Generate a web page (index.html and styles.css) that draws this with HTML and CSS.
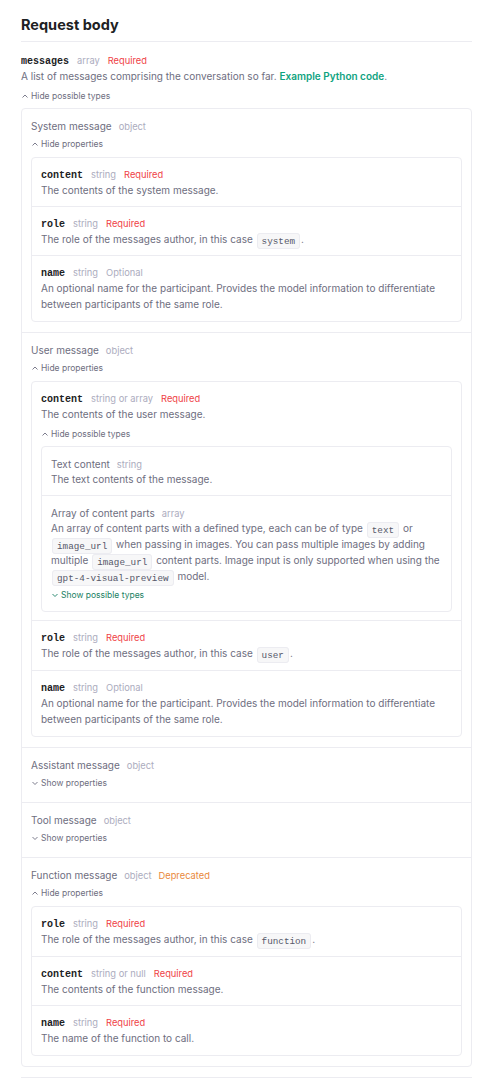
FILE: index.html
```html
<!DOCTYPE html>
<html>
<head>
<meta charset="utf-8">
<link rel="stylesheet" href="styles.css">
</head>
<body>
<div class="page">
  <h2 class="title">Request body</h2>

  <div class="param">
    <div class="param-head"><span class="pname">messages</span><span class="ptype">array</span><span class="req">Required</span></div>
    <div class="desc">A list of messages comprising the conversation so far. <a class="link" href="#">Example Python code</a>.</div>
    <div class="toggle"><svg class="chev" viewBox="0 0 8 8"><polyline points="1.5,5.5 4,3 6.5,5.5"/></svg>Hide possible types</div>

    <div class="box">
      <div class="section">
        <div class="sec-head"><span class="sname">System message</span><span class="ptype">object</span></div>
        <div class="toggle"><svg class="chev" viewBox="0 0 8 8"><polyline points="1.5,5.5 4,3 6.5,5.5"/></svg>Hide properties</div>
        <div class="inner">
          <div class="row">
            <div class="param-head"><span class="pname">content</span><span class="ptype">string</span><span class="req">Required</span></div>
            <div class="desc">The contents of the system message.</div>
          </div>
          <div class="row">
            <div class="param-head"><span class="pname">role</span><span class="ptype">string</span><span class="req">Required</span></div>
            <div class="desc">The role of the messages author, in this case <code>system</code>.</div>
          </div>
          <div class="row">
            <div class="param-head"><span class="pname">name</span><span class="ptype">string</span><span class="opt">Optional</span></div>
            <div class="desc">An optional name for the participant. Provides the model information to differentiate between participants of the same role.</div>
          </div>
        </div>
      </div>

      <div class="section">
        <div class="sec-head"><span class="sname">User message</span><span class="ptype">object</span></div>
        <div class="toggle"><svg class="chev" viewBox="0 0 8 8"><polyline points="1.5,5.5 4,3 6.5,5.5"/></svg>Hide properties</div>
        <div class="inner">
          <div class="row">
            <div class="param-head"><span class="pname">content</span><span class="ptype">string or array</span><span class="req">Required</span></div>
            <div class="desc">The contents of the user message.</div>
            <div class="toggle"><svg class="chev" viewBox="0 0 8 8"><polyline points="1.5,5.5 4,3 6.5,5.5"/></svg>Hide possible types</div>
            <div class="inner nested">
              <div class="row">
                <div class="sec-head"><span class="sname">Text content</span><span class="ptype">string</span></div>
                <div class="desc">The text contents of the message.</div>
              </div>
              <div class="row">
                <div class="sec-head"><span class="sname">Array of content parts</span><span class="ptype">array</span></div>
                <div class="desc">An array of content parts with a defined type, each can be of type <code>text</code> or <code>image_url</code> when passing in images. You can pass multiple images by adding multiple <code>image_url</code> content parts. Image input is only supported when using the <code>gpt-4-visual-preview</code> model.</div>
                <div class="toggle green"><svg class="chev" viewBox="0 0 8 8"><polyline points="1.5,3 4,5.5 6.5,3"/></svg>Show possible types</div>
              </div>
            </div>
          </div>
          <div class="row tall">
            <div class="param-head"><span class="pname">role</span><span class="ptype">string</span><span class="req">Required</span></div>
            <div class="desc">The role of the messages author, in this case <code>user</code>.</div>
          </div>
          <div class="row">
            <div class="param-head"><span class="pname">name</span><span class="ptype">string</span><span class="opt">Optional</span></div>
            <div class="desc">An optional name for the participant. Provides the model information to differentiate between participants of the same role.</div>
          </div>
        </div>
      </div>

      <div class="section collapsed">
        <div class="sec-head"><span class="sname">Assistant message</span><span class="ptype">object</span></div>
        <div class="toggle"><svg class="chev" viewBox="0 0 8 8"><polyline points="1.5,3 4,5.5 6.5,3"/></svg>Show properties</div>
      </div>

      <div class="section collapsed">
        <div class="sec-head"><span class="sname">Tool message</span><span class="ptype">object</span></div>
        <div class="toggle"><svg class="chev" viewBox="0 0 8 8"><polyline points="1.5,3 4,5.5 6.5,3"/></svg>Show properties</div>
      </div>

      <div class="section">
        <div class="sec-head"><span class="sname">Function message</span><span class="ptype">object</span><span class="dep">Deprecated</span></div>
        <div class="toggle"><svg class="chev" viewBox="0 0 8 8"><polyline points="1.5,5.5 4,3 6.5,5.5"/></svg>Hide properties</div>
        <div class="inner">
          <div class="row tall">
            <div class="param-head"><span class="pname">role</span><span class="ptype">string</span><span class="req">Required</span></div>
            <div class="desc">The role of the messages author, in this case <code>function</code>.</div>
          </div>
          <div class="row">
            <div class="param-head"><span class="pname">content</span><span class="ptype">string or null</span><span class="req">Required</span></div>
            <div class="desc">The contents of the function message.</div>
          </div>
          <div class="row">
            <div class="param-head"><span class="pname">name</span><span class="ptype">string</span><span class="req">Required</span></div>
            <div class="desc">The name of the function to call.</div>
          </div>
        </div>
      </div>
    </div>
  </div>
  <div class="divider"></div>
</div>
</body>
</html>
```

FILE: styles.css
```css
* { box-sizing: border-box; }
html, body { margin: 0; padding: 0; background: #fff; }
body {
  font-family: Inter, "Noto Sans", "Liberation Sans", sans-serif;
  color: #6e6e80;
  font-size: 10px;
}
.page { padding: 13px 7px 0 21px; }
.title {
  margin: 0;
  font-size: 14.5px;
  font-weight: 700;
  line-height: 24px;
  color: #202123;
  padding-bottom: 4px;
  border-bottom: 1px solid #ececf1;
}
.param { padding-top: 12px; }
.param-head, .sec-head {
  display: flex;
  align-items: baseline;
  gap: 8px;
  line-height: 14px;
  height: 14px;
}
.sec-head { gap: 7px; }
.pname {
  font-family: "Liberation Mono", "DejaVu Sans Mono", monospace;
  font-weight: 700;
  font-size: 10px;
  color: #202123;
}
.ptype { color: #acacbe; font-size: 9.3px; }
.req { color: #ef4146; font-size: 9.3px; }
.opt { color: #acacbe; font-size: 9.3px; }
.dep { color: #e9883a; font-size: 9.3px; }
.sname { color: #6e6e80; font-size: 10px; }
.desc { line-height: 16px; color: #6e6e80; font-size: 10px; }
.link { color: #10a37f; font-weight: 600; text-decoration: none; }
.toggle {
  display: flex;
  align-items: center;
  gap: 2px;
  font-size: 8.5px;
  line-height: 14px;
  height: 14px;
  color: #6e6e80;
  margin-top: 5px;
}
.toggle.green { color: #1a7f64; margin-top: 4px; }
.sec-head + .toggle { margin-top: 4px; }
.chev { width: 8px; height: 8px; fill: none; stroke: currentColor; stroke-width: 0.9; }
.box {
  margin-top: 5px;
  border: 1px solid #ececf1;
  border-radius: 4px;
}
.section { padding: 10px 9px 10px; }
.section + .section { border-top: 1px solid #ececf1; }
.section.collapsed { padding-bottom: 12px; }
.inner {
  margin-top: 6px;
  border: 1px solid #ececf1;
  border-radius: 4px;
}
.inner.nested { margin-top: 5px; }
.row { padding: 10px 9px 8px; }
.row:last-child { padding-bottom: 9px; }
.row.tall { padding-bottom: 9px; }
.row + .row { border-top: 1px solid #ececf1; }
code {
  font-family: "Liberation Mono", "DejaVu Sans Mono", monospace;
  font-size: 9.3px;
  line-height: 10px;
  color: #565869;
  background: #f7f7f8;
  border: 1px solid #ececf1;
  border-radius: 3px;
  padding: 1.5px 4px;
  margin: 0 1px;
}
.divider { margin-top: 10px; border-top: 1px solid #ececf1; }
```
